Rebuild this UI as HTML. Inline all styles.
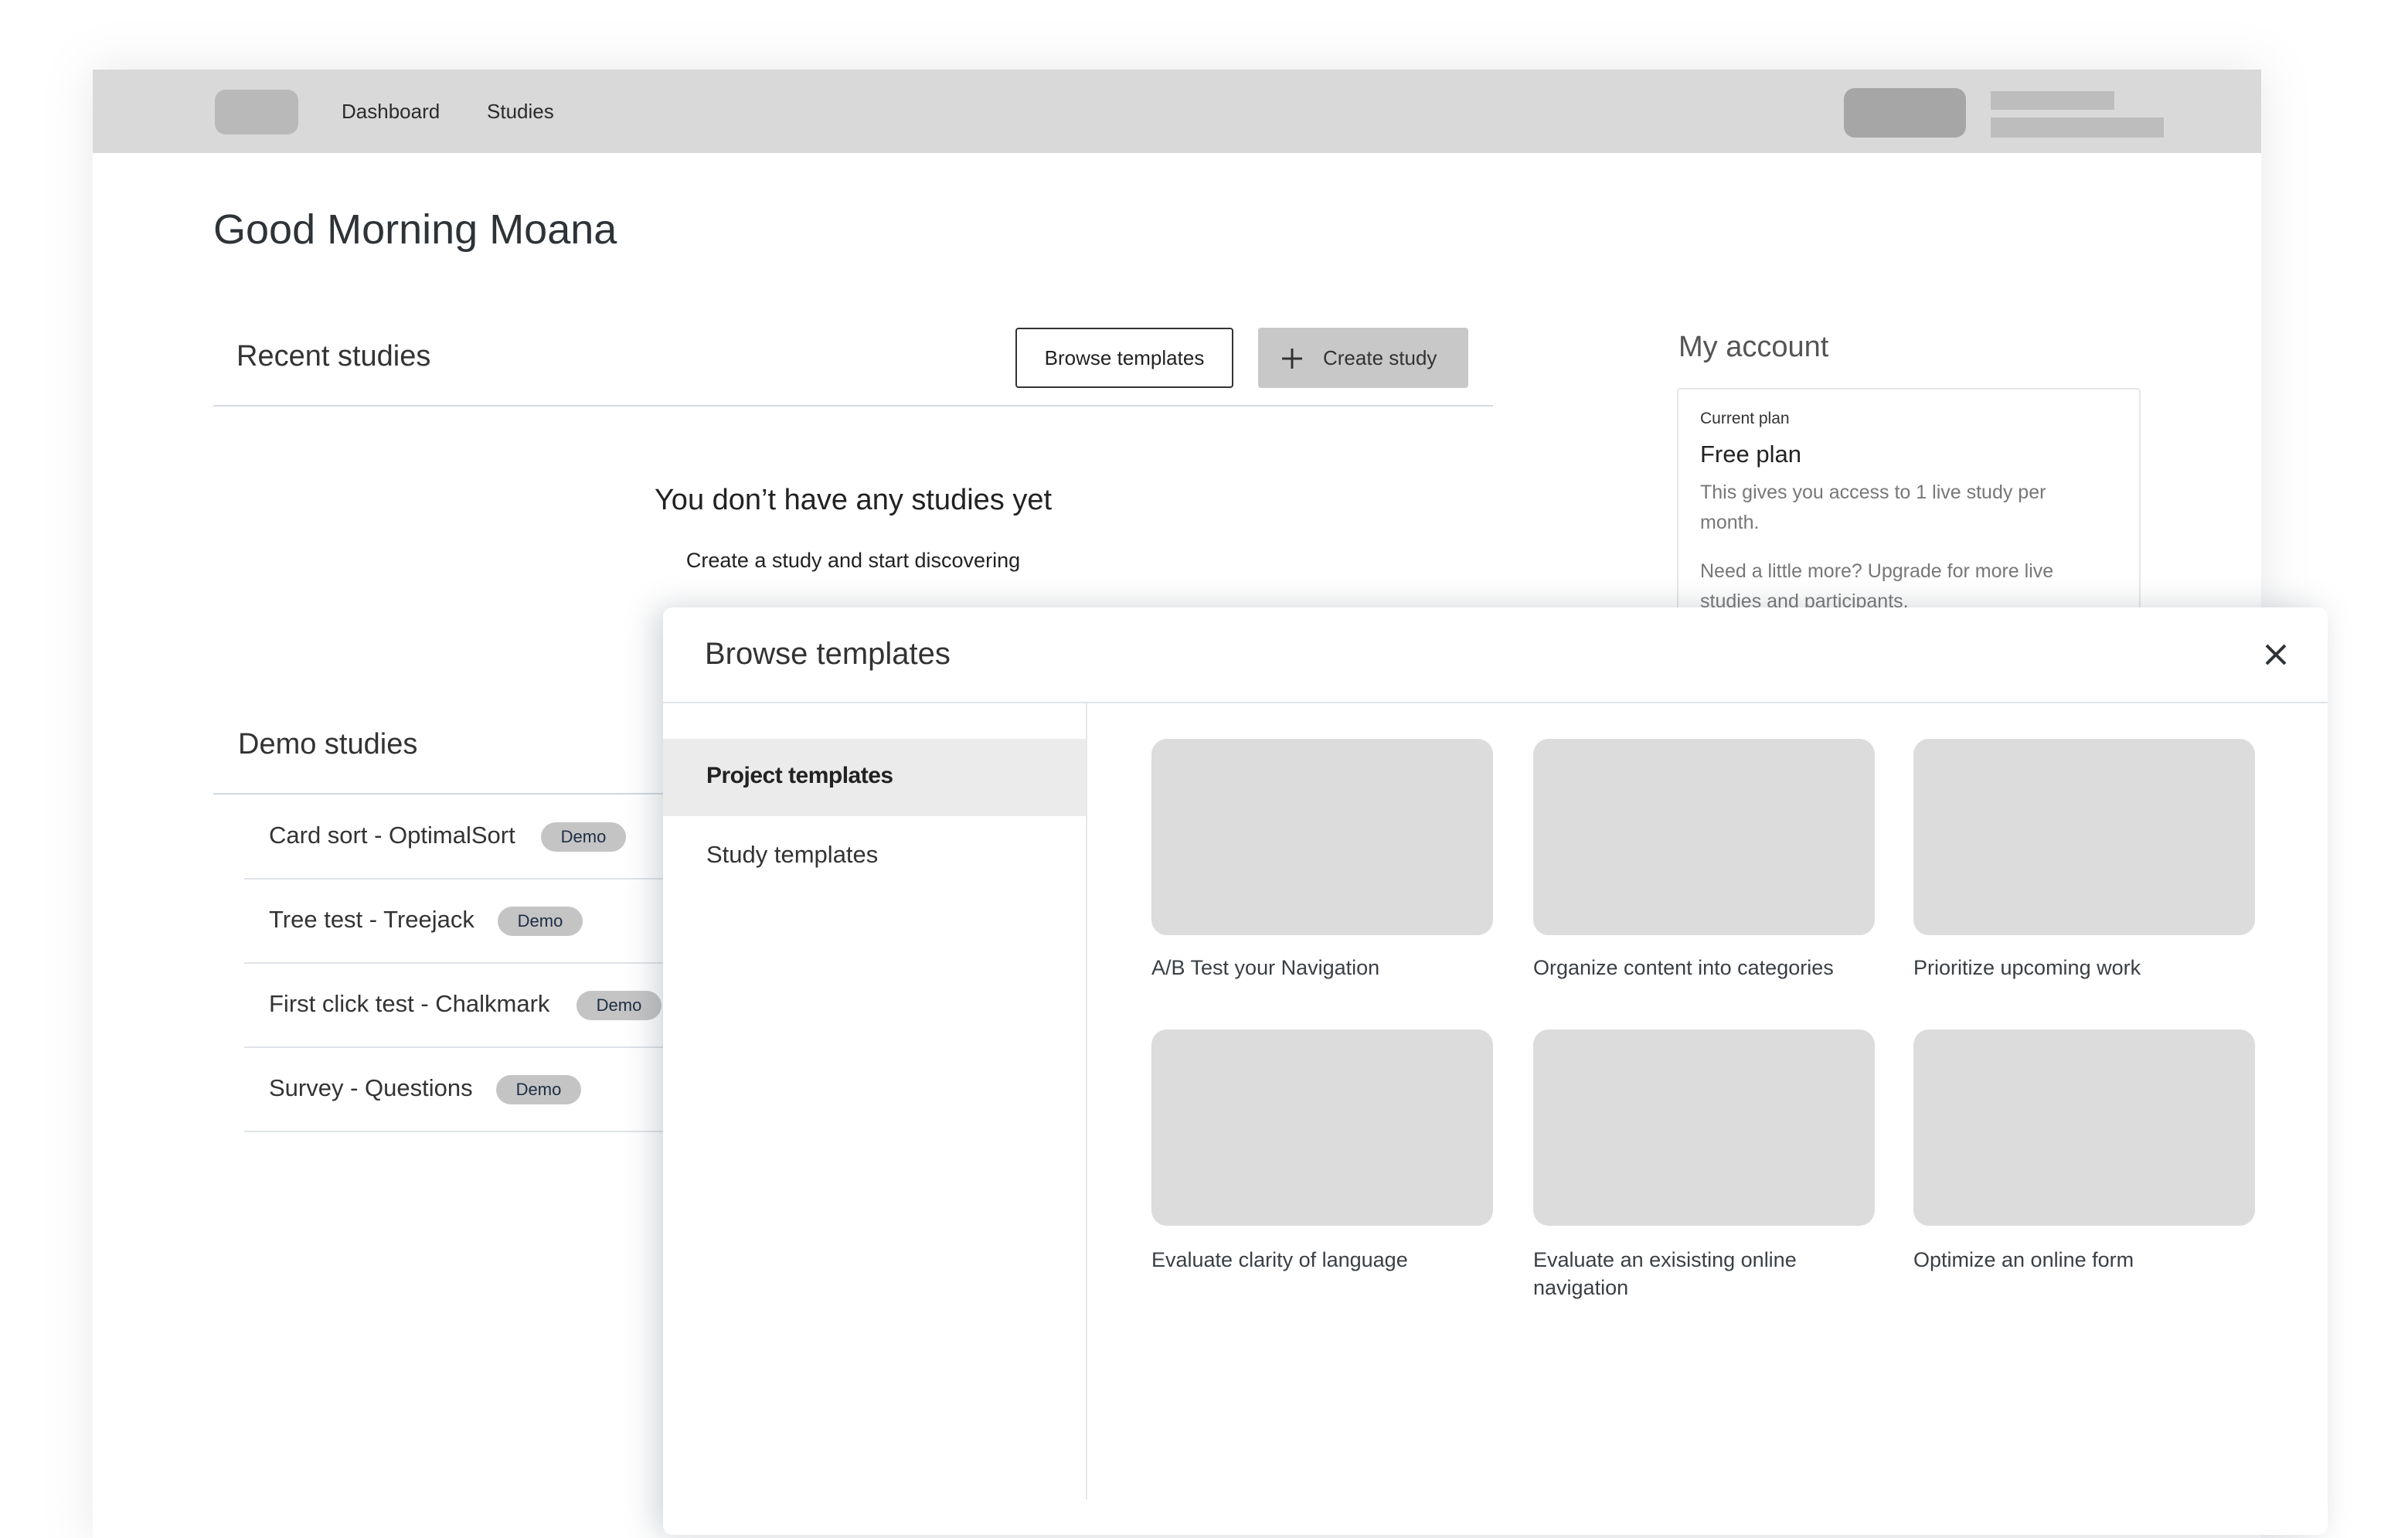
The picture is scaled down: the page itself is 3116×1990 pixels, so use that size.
<!DOCTYPE html>
<html><head><meta charset="utf-8"><style>
*{margin:0;padding:0;box-sizing:border-box}
body{width:3116px;height:1938px;background:#fff;position:relative;overflow:hidden;font-family:"Liberation Sans",sans-serif;color:#2e3338}
.a{position:absolute}
.card{left:120px;top:90px;width:2806px;height:1900px;background:#fff;box-shadow:0 0 60px rgba(120,130,140,.18)}
.t{position:absolute;white-space:nowrap}
.pill{position:absolute;height:38px;border-radius:19px;background:#c4c4c4;color:#1d2d44;font-size:22px;line-height:38px;text-align:center;width:110px}
.sep{position:absolute;height:2px;background:#dfe3e7}
.tile{position:absolute;width:442px;height:254px;border-radius:20px;background:#dcdcdc}
.cap{position:absolute;font-size:27px;color:#3a3f44;line-height:36px}
</style></head><body>
<div class="a card"></div>
<div class="a" style="left:120px;top:90px;width:2806px;height:108px;background:#d9d9d9"></div>
<div class="a" style="left:278px;top:116px;width:108px;height:58px;border-radius:14px;background:#b9b9b9"></div>
<div class="t" style="left:442px;top:129px;font-size:26px;color:#2b2b2b">Dashboard</div>
<div class="t" style="left:630px;top:129px;font-size:26px;color:#2b2b2b">Studies</div>
<div class="a" style="left:2386px;top:114px;width:158px;height:64px;border-radius:14px;background:#a6a6a6"></div>
<div class="a" style="left:2576px;top:118px;width:160px;height:24px;background:#bdbdbd"></div>
<div class="a" style="left:2576px;top:152px;width:224px;height:26px;background:#bdbdbd"></div>

<div class="t" style="left:276px;top:266px;font-size:54px;color:#2e3338">Good Morning Moana</div>
<div class="t" style="left:306px;top:440px;font-size:38px;color:#333">Recent studies</div>
<div class="a" style="left:1314px;top:424px;width:282px;height:78px;border:2px solid #333;border-radius:4px;font-size:26px;line-height:74px;text-align:center;color:#222;white-space:nowrap">Browse templates</div>
<div class="a" style="left:1628px;top:424px;width:272px;height:78px;background:#c8c8c8;border-radius:4px;font-size:26px;line-height:78px;color:#333;padding-left:84px;white-space:nowrap">Create study</div>
<svg class="a" style="left:1656px;top:448px" width="32" height="32" viewBox="0 0 32 32"><path d="M16 3V29M3 16H29" stroke="#333" stroke-width="3"/></svg>
<div class="sep" style="left:276px;top:524px;width:1656px;background:#d5dbe0"></div>

<div class="t" style="left:804px;width:600px;text-align:center;top:626px;font-size:38px;color:#222">You don’t have any studies yet</div>
<div class="t" style="left:804px;width:600px;text-align:center;top:710px;font-size:27px;color:#222">Create a study and start discovering</div>

<div class="t" style="left:2172px;top:428px;font-size:38px;color:#555">My account</div>
<div class="a" style="left:2170px;top:502px;width:600px;height:400px;border:2px solid #e6e6e6;border-radius:4px"></div>
<div class="t" style="left:2200px;top:530px;font-size:21px;color:#333">Current plan</div>
<div class="t" style="left:2200px;top:570px;font-size:31px;color:#222">Free plan</div>
<div class="a" style="left:2200px;top:618px;width:500px;font-size:25px;line-height:39px;color:#777">This gives you access to 1 live study per month.<br><div style="height:24px"></div>Need a little more? Upgrade for more live studies and participants.</div>

<div class="t" style="left:308px;top:942px;font-size:38px;color:#333">Demo studies</div>
<div class="sep" style="left:276px;top:1026px;width:600px;background:#d0d8e0"></div>
<div class="t" style="left:348px;top:1063px;font-size:31px;color:#333">Card sort - OptimalSort</div><div class="pill" style="left:700px;top:1064px">Demo</div>
<div class="sep" style="left:316px;top:1136px;width:560px"></div>
<div class="t" style="left:348px;top:1172px;font-size:31px;color:#333">Tree test - Treejack</div><div class="pill" style="left:644px;top:1173px">Demo</div>
<div class="sep" style="left:316px;top:1245px;width:560px"></div>
<div class="t" style="left:348px;top:1281px;font-size:31px;color:#333">First click test - Chalkmark</div><div class="pill" style="left:746px;top:1282px">Demo</div>
<div class="sep" style="left:316px;top:1354px;width:560px"></div>
<div class="t" style="left:348px;top:1390px;font-size:31px;color:#333">Survey - Questions</div><div class="pill" style="left:642px;top:1391px">Demo</div>
<div class="sep" style="left:316px;top:1463px;width:560px"></div>

<div class="a" style="left:858px;top:786px;width:2154px;height:1200px;background:#fff;border-radius:12px;box-shadow:-10px 0 40px rgba(90,105,120,.28)"></div>
<div class="t" style="left:912px;top:824px;font-size:40px;color:#333">Browse templates</div>
<svg class="a" style="left:2930px;top:832px" width="30" height="30" viewBox="0 0 30 30"><path d="M3 3L27 27M27 3L3 27" stroke="#2e3338" stroke-width="4"/></svg>
<div class="sep" style="left:858px;top:908px;width:2154px"></div>
<div class="a" style="left:1405px;top:910px;width:2px;height:1030px;background:#e4e7ea"></div>
<div class="a" style="left:858px;top:956px;width:547px;height:100px;background:#ebebeb"></div>
<div class="t" style="left:914px;top:987px;font-size:30px;color:#222;font-weight:bold;letter-spacing:-0.5px">Project templates</div>
<div class="t" style="left:914px;top:1088px;font-size:31px;color:#333">Study templates</div>

<div class="tile" style="left:1490px;top:956px"></div>
<div class="tile" style="left:1984px;top:956px"></div>
<div class="tile" style="left:2476px;top:956px"></div>
<div class="tile" style="left:1490px;top:1332px"></div>
<div class="tile" style="left:1984px;top:1332px"></div>
<div class="tile" style="left:2476px;top:1332px"></div>
<div class="cap" style="left:1490px;top:1234px">A/B Test your Navigation</div>
<div class="cap" style="left:1984px;top:1234px">Organize content into categories</div>
<div class="cap" style="left:2476px;top:1234px">Prioritize upcoming work</div>
<div class="cap" style="left:1490px;top:1612px">Evaluate clarity of language</div>
<div class="cap" style="left:1984px;top:1612px;width:400px">Evaluate an exisisting online navigation</div>
<div class="cap" style="left:2476px;top:1612px">Optimize an online form</div>
</body></html>
